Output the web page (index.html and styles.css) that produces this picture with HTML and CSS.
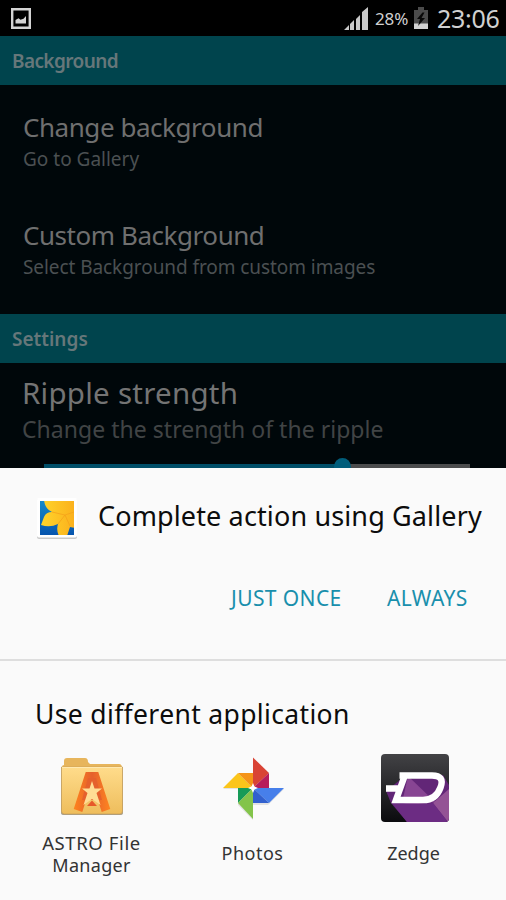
FILE: index.html
```html
<!DOCTYPE html>
<html lang="en">
<head>
<meta charset="utf-8">
<title>Complete action</title>
<link rel="stylesheet" href="styles.css">
</head>
<body>
<div class="screen">
  <header class="status">
    <svg class="shot" viewBox="0 0 20 21"><path fill="none" stroke="#d4d4d4" stroke-width="2.4" d="M1.2 1.2h17.6v18.6H1.2z"/><path fill="#d4d4d4" d="M4.500 15.500V12l3-1.800 2 1.500 3-1 2.500-2.700v7.500z"/></svg>
    <svg class="signal" viewBox="0 0 25 24"><path fill="#c8c8c8" d="M0 23 5 18V23zM6 17l4-4V23H6zM12 12l4-4V23h-4zM18 5l6-5V23h-6z"/></svg>
    <span class="percent">28%</span>
    <svg class="battery" viewBox="0 0 15 22"><path fill="#4b4b4b" d="M4 0h6v3h4v19H0V3h4z"/><path fill="#d2d2d2" d="M0 16.500h14V22H0z"/><path fill="#080808" d="M8.500 5.500 3 12h3l-2 7 7-8H7.500l3-5.500z"/></svg>
    <span class="clock">23:06</span>
  </header>
  <main class="settings">
    <h2 class="section"><span class="t-background">Background</span></h2>
    <section class="group">
      <div class="row"><h3 class="t-change">Change background</h3><p class="t-goto">Go to Gallery</p></div>
      <div class="row"><h3 class="t-custom">Custom Background</h3><p class="t-select">Select Background from custom images</p></div>
    </section>
    <h2 class="section"><span class="t-settings">Settings</span></h2>
    <section class="ripple">
      <h3 class="t-ripple">Ripple strength</h3>
      <p class="t-strength">Change the strength of the ripple</p>
      <div class="slider"><div class="filled"></div><div class="knob"></div></div>
    </section>
  </main>
  <div class="sheet">
    <div class="chosen">
      <svg class="gallery" viewBox="0 0 42 43">
        <defs><linearGradient id="sea" x2="0" y2="1"><stop stop-color="#1689c9"/><stop offset="1" stop-color="#0755ae"/></linearGradient><linearGradient id="petal"><stop stop-color="#ffd52b"/><stop offset="1" stop-color="#fbb01c"/></linearGradient><clipPath id="tile"><path d="M4 4h34v34H4z"/></clipPath></defs>
        <rect x="1" y="2" width="40" height="40" rx="2" fill="#c9c9c9"/><rect x="1" y="1" width="40" height="39.500" rx="2" fill="#fff"/>
        <path fill="url(#sea)" d="M4 4h34v34H4z"/>
        <g clip-path="url(#tile)"><path fill="url(#petal)" d="M8 3q1 9 8 12-6 0-8 5l-3 8q9 3 17-1-2 6 1 12h8l3-9 5 1V3z"/><path fill="none" stroke="#f5a21b" stroke-width=".8" d="m16 15 13 3-7 9M34 29l-5-11 9-3"/></g>
      </svg>
      <h1 class="t-complete">Complete action using Gallery</h1>
    </div>
    <div class="actions"><button class="t-once">JUST ONCE</button><button class="t-always">ALWAYS</button></div>
    <h2 class="t-use">Use different application</h2>
    <div class="apps">
      <div class="app">
        <svg class="icon" viewBox="0 0 70 70">
          <defs><linearGradient id="paper" x2="0" y2="1"><stop stop-color="#ffdc8b"/><stop offset="1" stop-color="#eebd5c"/></linearGradient><linearGradient id="orange" gradientUnits="userSpaceOnUse" x1="16" y1="0" x2="54" y2="0"><stop stop-color="#ff851d"/><stop offset=".5" stop-color="#e5602c"/><stop offset="1" stop-color="#ff8620"/></linearGradient></defs>
          <path fill="#aaa08c" d="M4 14h62v46q0 2-3 2H7q-3 0-3-2z"/>
          <path fill="#e7b55c" d="M7 8q0-3 3-3h18q3 0 3 4l2 2h29q3 0 3 4v10H5V14q0-2 2-2z"/>
          <path fill="url(#paper)" stroke="#c49b54" stroke-width=".6" d="M4.500 14h61v44q0 3-3 3h-55q-3 0-3-3z"/>
          <path fill="none" stroke="#ffe9b1" d="M5 14.500h60"/>
          <path fill="none" stroke="url(#orange)" stroke-width="9" d="M21 57.500 32 23.500h6l11 34"/>
          <path fill="#e5602c" d="M31 25h8l6 22H25z"/>
          <path fill="#ffdc94" d="m35 28 2.500 7.500H45L39.500 40l4 12-8.500-6-8.500 6 4-12-5.500-4.500h7.500z"/>
          <path fill="#e7582a" d="m30 53 5-5.500 5 5.500z"/>
        </svg>
        <span class="t-astro">ASTRO File</span><span class="t-manager">Manager</span>
      </div>
      <div class="app">
        <svg class="icon" viewBox="0 0 70 70">
          <path fill="#c9c9c9" d="m5 35 16-15h14V5l16 15v15h15L50 51H35v15L20 51V35z" opacity=".5" transform="translate(0 1)"/>
          <path fill="#d94335" d="M35 4.500 51 20 35 35z"/><path fill="#b71c5c" d="M51 20v15H35z"/>
          <path fill="#fbc51b" d="M5 35 20 20l15 15z"/><path fill="#f59318" d="M20 20h15v15z"/>
          <path fill="#169b57" d="M20 35h15L20 50z"/><path fill="#83c44a" d="M20 50 35 35v31z"/>
          <path fill="#477fea" d="M35 35h31L51 50z"/><path fill="#3160ce" d="M35 35 51 50H35z"/>
          <path fill="#fff" d="m35 30 1.500 3.500L40 35l-3.500 1.500L35 40l-1.500-3.500L30 35l3.500-1.500z"/>
        </svg>
        <span class="t-photos">Photos</span>
      </div>
      <div class="app">
        <svg class="icon" viewBox="0 0 70 70">
          <defs><linearGradient id="dark" x2="0" y2="1"><stop stop-color="#424245"/><stop offset="1" stop-color="#0b0b0e"/></linearGradient><clipPath id="zclip"><rect x="2" y="1" width="68" height="68" rx="4"/></clipPath></defs>
          <g clip-path="url(#zclip)"><path fill="url(#dark)" d="M2 1h68v68H2z"/>
          <path fill="#622677" d="m7 38 5 12 16 19h42V32l-6-10-43 5z"/><path fill="#884593" d="m29 23 27 26-25 3-8-2z"/><path fill="#945395" d="m54 50 16-14v33h-1z"/><path fill="#6c2c83" d="m43 51 11-1 15 19H28L13 50z"/></g>
          <path fill="none" stroke="#fff" stroke-width="6.500" d="M7 35.500h14M20.500 22.500H53q13 0 8.500 12Q57 47 44 47H17l9-25"/>
        </svg>
        <span class="t-zedge">Zedge</span>
      </div>
    </div>
  </div>
</div>
</body>
</html>
```
FILE: styles.css
```css
* { box-sizing: border-box; }
body { margin: 0; background: #000; font-family: "Noto Sans", sans-serif; }
h1, h2, h3, p { margin: 0; font-weight: 400; white-space: nowrap; }
svg { display: block; flex: none; }
.screen { width: 506px; height: 900px; overflow: hidden; display: flex; flex-direction: column; }
.status { height: 36px; flex: none; display: flex; align-items: flex-start; padding: 0 0 0 11px; color: #d0d0d0; }
.shot { width: 20px; height: 21px; margin-top: 8px; }
.signal { width: 25px; height: 24px; margin: 7px 6px 0 313px; }
.percent { width: 39px; font-size: 17px; line-height: 38px; letter-spacing: -.1px; }
.battery { width: 15px; height: 22px; margin-top: 7px; }
.clock { margin-left: 8px; font-size: 25px; line-height: 37px; letter-spacing: -.3px; }
.settings { height: 432px; flex: none; overflow: hidden; background: #00070a; color: #6c6c6c; }
.section { height: 49px; background: #00444d; padding-left: 12px; font-size: 19px; line-height: 50px; font-weight: 600; color: #66777a; }
.t-background { letter-spacing: -.6px; }
.group { height: 229px; padding: 23px 0 0 23px; }
.row { height: 108px; color: #4b5052; }
.row h3 { font-size: 26px; line-height: 38px; color: #6f6f6f; letter-spacing: -.45px; }
.row p { font-size: 19px; line-height: 26px; }
.row .t-select { letter-spacing: -.07px; }
.ripple { padding: 9px 0 0 22px; }
.t-ripple { font-size: 29.500px; line-height: 42px; color: #747474; letter-spacing: .25px; }
.t-strength { margin-top: 1px; font-size: 23px; line-height: 29px; color: #414445; letter-spacing: .03px; }
.slider { display: flex; position: relative; width: 426px; height: 4px; margin: 20px 0 0 22px; background: #4b4c4d; }
.filled { width: 298px; background: #004e68; }
.knob { position: absolute; left: 290px; top: -6px; width: 17px; height: 17px; border-radius: 50%; background: #005d7b; }
.sheet { height: 432px; background: #fafafa; color: #0c0c0c; }
.chosen { height: 106px; display: flex; align-items: flex-start; padding: 29px 0 0 36px; }
.gallery { width: 42px; height: 43px; }
.t-complete { margin: 1px 0 0 20px; font-size: 27px; line-height: 36px; letter-spacing: .13px; }
.actions { height: 87px; border-bottom: 2px solid #dedede; display: flex; align-items: flex-start; padding: 6px 0 0 231px; }
button { border: 0; padding: 0; background: none; color: #198fac; font: 21px/36px "Noto Sans", sans-serif; text-align: left; white-space: nowrap; letter-spacing: .4px; }
.t-once { width: 156px; }
.t-use { height: 92px; padding: 35px 0 0 35px; font-size: 26.500px; line-height: 36px; letter-spacing: .35px; }
.apps { display: flex; padding-left: 11px; }
.app { width: 161px; display: flex; flex-direction: column; align-items: center; font-size: 18px; line-height: 23px; color: #333; }
.icon { width: 70px; height: 70px; margin-bottom: 8px; }
.t-astro { font-size: 18.500px; letter-spacing: .6px; }
.t-manager { letter-spacing: .3px; }
.t-photos, .t-zedge { margin-top: 11px; }
.t-photos { letter-spacing: .5px; }
```
